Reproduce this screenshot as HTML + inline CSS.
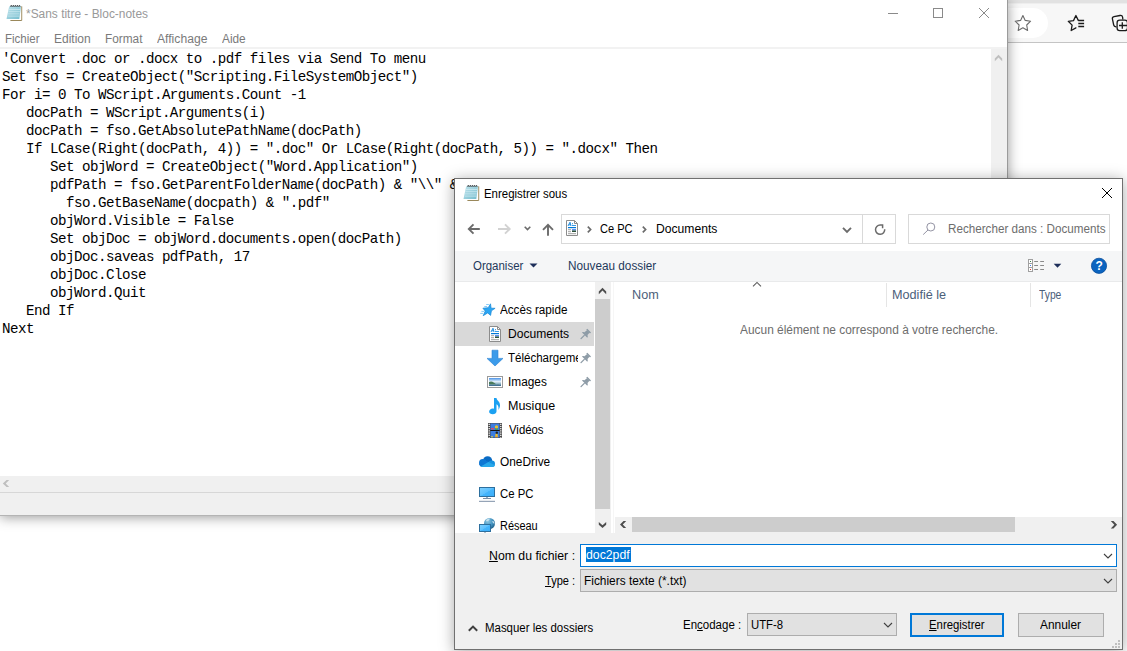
<!DOCTYPE html>
<html><head><meta charset="utf-8">
<style>
*{box-sizing:border-box;margin:0;padding:0}
html,body{width:1127px;height:651px;overflow:hidden;background:#fff}
body{position:relative;font-family:"Liberation Sans",sans-serif;font-size:12px;color:#000}
.a{position:absolute}
svg{position:absolute;overflow:visible}
.t{position:absolute;white-space:nowrap;font-size:12px;line-height:16px;height:16px}
#code{position:absolute;left:2px;top:50px;font-family:"Liberation Mono",monospace;font-size:14.2px;letter-spacing:-0.52px;line-height:18px;white-space:pre;color:#000}
</style></head><body>
<!-- Edge background -->
<div class="a" style="left:1008px;top:0;width:119px;height:42px;background:#f7f7f7"></div>
<div class="a" style="left:1008px;top:0;width:119px;height:4px;background:linear-gradient(#e2e2e2 0,#e2e2e2 70%,#f7f7f7 100%)"></div>
<div class="a" style="left:1000px;top:8px;width:48px;height:30px;background:#fff;border-radius:0 15px 15px 0"></div>
<div class="a" style="left:1008px;top:42px;width:119px;height:1px;background:#c4c4c4"></div>
<!--EDGEICONS-->
<!-- Notepad -->
<div class="a" id="np" style="left:0;top:0;width:1008px;height:516px;background:#fff;border-right:1px solid #9b9b9b;box-shadow:0 1px 12px rgba(0,0,0,.42)">
  <div class="a" style="left:0;top:47px;width:1007px;height:2px;background:#f2f2f2"></div>
  <div id="code">'Convert .doc or .docx to .pdf files via Send To menu
Set fso = CreateObject("Scripting.FileSystemObject")
For i= 0 To WScript.Arguments.Count -1
   docPath = WScript.Arguments(i)
   docPath = fso.GetAbsolutePathName(docPath)
   If LCase(Right(docPath, 4)) = ".doc" Or LCase(Right(docPath, 5)) = ".docx" Then
      Set objWord = CreateObject("Word.Application")
      pdfPath = fso.GetParentFolderName(docPath) &amp; "\\" &amp; _
        fso.GetBaseName(docpath) &amp; ".pdf"
      objWord.Visible = False
      Set objDoc = objWord.documents.open(docPath)
      objDoc.saveas pdfPath, 17
      objDoc.Close
      objWord.Quit
   End If
Next</div>
  <div class="a" style="left:991px;top:49px;width:16px;height:427px;background:#f0f0f0"></div>
  <div class="a" style="left:0;top:476px;width:1007px;height:16px;background:#f0f0f0"></div>
  <div class="a" style="left:0;top:492px;width:1007px;height:24px;background:#f0f0f0;border-top:1px solid #d7d7d7;border-bottom:1px solid #b4b4b4"></div>
</div>
<!--NPICONS-->
<!-- Dialog frame -->
<div class="a" id="dlg" style="left:454px;top:178px;width:669px;height:472px;background:#f0f0f0;border:1px solid #707070;box-shadow:0 2px 14px rgba(0,0,0,.35)"></div>
<div class="a" style="left:455px;top:179px;width:667px;height:72px;background:#fff"></div>
<div class="a" style="left:455px;top:251px;width:667px;height:31px;background:#f5f6f7;border-bottom:1px solid #e9eaeb"></div>
<!-- address box -->
<div class="a" style="left:561px;top:214px;width:335px;height:30px;background:#fff;border:1px solid #d9d9d9"></div>
<div class="a" style="left:862px;top:215px;width:1px;height:28px;background:#d9d9d9"></div>
<div class="a" style="left:908px;top:214px;width:202px;height:30px;background:#fff;border:1px solid #d9d9d9"></div>
<!-- main panes -->
<div class="a" style="left:455px;top:282px;width:159px;height:251px;background:#fff"></div>
<div class="a" style="left:455px;top:322px;width:139px;height:24px;background:#d9d9d9"></div>
<div class="a" style="left:595px;top:282px;width:16px;height:251px;background:#f0f0f0"></div>
<div class="a" style="left:613px;top:282px;width:1px;height:251px;background:#f6f6f6"></div>
<div class="a" style="left:595px;top:299px;width:15px;height:210px;background:#cdcdcd"></div>
<div class="a" style="left:614px;top:282px;width:508px;height:251px;background:#fff"></div>
<div class="a" style="left:886px;top:283px;width:1px;height:24px;background:#e5e5e5"></div>
<div class="a" style="left:1030px;top:283px;width:1px;height:24px;background:#e5e5e5"></div>
<div class="a" style="left:615px;top:517px;width:507px;height:16px;background:#f0f0f0"></div>
<div class="a" style="left:632px;top:517px;width:383px;height:15px;background:#cdcdcd"></div>
<!-- inputs -->
<div class="a" style="left:580px;top:544px;width:537px;height:23px;background:#fff;border:1px solid #0078d7"></div>
<div class="a" style="left:586px;top:547px;width:45px;height:15px;background:#0078d7"></div>
<div class="a" style="left:580px;top:569px;width:537px;height:23px;background:#e1e1e1;border:1px solid #adadad"></div>
<div class="a" style="left:747px;top:613px;width:150px;height:23px;background:#e1e1e1;border:1px solid #adadad"></div>
<div class="a" style="left:910px;top:613px;width:94px;height:24px;background:#e1e1e1;border:2px solid #0078d7"></div>
<div class="a" style="left:1018px;top:613px;width:86px;height:24px;background:#e1e1e1;border:1px solid #adadad"></div>
<svg width="1127" height="651" viewBox="0 0 1127 651" style="left:0;top:0">
<defs>
 <linearGradient id="gnp" x1="0" y1="0" x2="1" y2="1"><stop offset="0" stop-color="#bfe3ec"/><stop offset="1" stop-color="#74bccd"/></linearGradient>
 <linearGradient id="gmon" x1="0" y1="0" x2="1" y2="1"><stop offset="0" stop-color="#7fd0ff"/><stop offset=".5" stop-color="#5cc0fe"/><stop offset=".52" stop-color="#45b5fc"/><stop offset="1" stop-color="#3aaefa"/></linearGradient>
 <linearGradient id="gimg" x1="0" y1="0" x2="0" y2="1"><stop offset="0" stop-color="#4a93e8"/><stop offset=".45" stop-color="#e4f0fa"/><stop offset=".72" stop-color="#8fb4c4"/><stop offset="1" stop-color="#2d5f86"/></linearGradient>
 <radialGradient id="gglobe" cx=".35" cy=".3" r=".8"><stop offset="0" stop-color="#8cc6e2"/><stop offset=".6" stop-color="#3f8fbd"/><stop offset="1" stop-color="#1d587e"/></radialGradient>
</defs>
<!-- Notepad title icon -->
<g transform="translate(6.5,5)">
  <path d="M3.900 15.400H15.200V1.400" fill="none" stroke="#8f7a48" stroke-width="1"/>
  <path d="M3.500 2.200H14.700V14.900H3.500Z" fill="#fff"/>
  <path d="M2.7 1.3H14.5L12.8 13.9H0Z" fill="url(#gnp)"/>
  <path d="M2.3 4.5H13.8M1.9 6.7H13.5M1.5 8.9H13.2M1.1 11.1H12.9" stroke="#d3edf3" stroke-width=".7" fill="none"/>
  <path d="M4 2l.75-2 .75 2M6.050 2l.75-2 .75 2M8.100 2l.75-2 .75 2M10.150 2l.75-2 .75 2M12.200 2l.75-2 .75 2" stroke="#2b3336" stroke-width=".65" fill="none"/></g>
<!-- window controls -->
<g stroke="#8a8a8a" stroke-width="1" fill="none">
 <path d="M888 13.5H898"/>
 <rect x="933.5" y="8.5" width="9" height="9"/>
 <path d="M979 8L989 18M989 8L979 18"/>
</g>
<!-- notepad scroll arrows -->
<path d="M994.800 58.600L998.500 54.800L1002.200 58.600V61.300L998.500 57.600L994.800 61.300Z" fill="#bfbfbf"/>
<path d="M9.200 479.900H6.500L2.800 483.500L6.500 487.100H9.200L5.700 483.500Z" fill="#bfbfbf"/>
<!-- Edge icons -->
<path d="M1022.900 15.600L1025.200 20.400L1030.600 21.200L1026.700 25L1027.600 30.400L1022.900 27.800L1018.200 30.400L1019.100 25L1015.200 21.200L1020.600 20.400Z" fill="none" stroke="#6a6a6a" stroke-width="1.100" stroke-linejoin="round"/>
<path d="M1078.300 20.400L1075.900 15.500L1073.500 20.600L1068.300 21.300L1072.100 25.100L1071.200 30.500L1075.900 27.900" fill="none" stroke="#1a1a1a" stroke-width="1.300" stroke-linejoin="round" stroke-linecap="round"/>
<path d="M1078.300 20.500H1084.100M1078.300 23.500H1084.100M1078.300 26.500H1084.100" stroke="#1a1a1a" stroke-width="1.300"/>
<path d="M1116 26.900C1114.500 26.600 1114 26.300 1113.700 25L1112.400 18.900C1112.100 17.500 1112.700 17 1114 16.700L1120 15.500C1121.500 15.200 1122.300 15.700 1122.600 17.100L1122.800 19" fill="none" stroke="#1a1a1a" stroke-width="1.300" stroke-linecap="round"/>
<rect x="1117.100" y="20.200" width="10.400" height="10.400" rx="2.600" fill="none" stroke="#1a1a1a" stroke-width="1.300"/>
<path d="M1119 25.500H1127M1122.300 22.200V28.800" stroke="#1a1a1a" stroke-width="1.300"/>
<!-- Dialog title icon + close -->
<g transform="translate(463.500,185)">
  <path d="M3.900 15.400H15.200V1.400" fill="none" stroke="#8f7a48" stroke-width="1"/>
  <path d="M3.500 2.200H14.700V14.900H3.500Z" fill="#fff"/>
  <path d="M2.7 1.3H14.5L12.8 13.9H0Z" fill="url(#gnp)"/>
  <path d="M2.3 4.5H13.8M1.9 6.7H13.5M1.5 8.9H13.2M1.1 11.1H12.9" stroke="#d3edf3" stroke-width=".7" fill="none"/>
  <path d="M4 2l.75-2 .75 2M6.050 2l.75-2 .75 2M8.100 2l.75-2 .75 2M10.150 2l.75-2 .75 2M12.200 2l.75-2 .75 2" stroke="#2b3336" stroke-width=".65" fill="none"/></g>
<path d="M1102 188L1112 198M1112 188L1102 198" stroke="#000" stroke-width="1"/>
<!-- nav arrows -->
<g fill="none" stroke="#6b6b6b" stroke-width="1.9">
 <path d="M479.800 229H469M473.500 224.300L468.800 229L473.500 233.700"/>
 <path d="M524.700 226.800L527.500 229.600L530.300 226.800" stroke-width="1.6"/>
 <path d="M548 235.700V225M543 229.800L548 224.800L553 229.800"/>
 <path d="M587.800 226.700L590.600 229.500L587.800 232.300" stroke-width="1.7"/>
 <path d="M642.800 226.700L645.600 229.500L642.800 232.300" stroke-width="1.7"/>
 <path d="M843 227.800L847 231.800L851 227.800" stroke-width="1.9"/>
 <path d="M882.600 228.300V225.100H880.100A4.600 4.600 0 1 0 884.700 229.300" stroke-width="1.500" stroke-linejoin="miter"/>
</g>
<path d="M498 229H508.800M505 224.300L509.700 229L505 233.700" fill="none" stroke="#d2d2d2" stroke-width="1.9"/>
<g transform="translate(566,220)">
  <path d="M.5.5H8.5L11.5 3.5V15.5H.5Z" fill="#fff" stroke="#8c8c8c"/>
  <path d="M8.5.5V3.5H11.5" fill="none" stroke="#8c8c8c"/>
  <path d="M2 6L4 2.2L5 6M2.8 4.8H4.8" stroke="#1f8de0" stroke-width="1" fill="none"/>
  <rect x="6" y="3.2" width="1" height="1" fill="#1f8de0"/>
  <rect x="6" y="5" width="4" height="1" fill="#3a9be6"/>
  <rect x="2" y="7" width="8" height="1.2" fill="#0078d7"/>
  <rect x="2" y="9.2" width="3" height="1" fill="#a0a0a0"/>
  <rect x="2" y="11.2" width="3" height="1" fill="#a0a0a0"/>
  <rect x="6" y="9" width="4" height="1.5" fill="#5b8df0"/>
  <rect x="6" y="10.5" width="4" height="1.5" fill="#2c5238"/>
  <rect x="2" y="13.2" width="8" height="1" fill="#a0a0a0"/></g>
<!-- search magnifier -->
<circle cx="930.800" cy="227" r="4" fill="none" stroke="#9494a4" stroke-width="1"/>
<path d="M928 230L923.200 234.600" stroke="#9494a4" stroke-width="1"/>
<!-- toolbar -->
<path d="M529.500 263.500H537.500L533.500 267.500Z" fill="#1e2f5a"/>
<rect x="1028.500" y="259.500" width="4" height="12" fill="#fff" stroke="#a0a0a0"/>
<path d="M1028.500 263.500H1032.500M1028.500 267.500H1032.500" stroke="#a0a0a0"/>
<rect x="1030" y="261" width="1" height="1" fill="#3a7a4a"/><rect x="1030" y="265" width="1" height="1" fill="#3a7af0"/><rect x="1030" y="269" width="1" height="1" fill="#e03030"/>
<path d="M1034.200 261.500H1038M1040.200 261.500H1044M1034.200 265.500H1038M1040.200 265.500H1044M1034.200 269.500H1038M1040.200 269.500H1044" stroke="#8a8a8a" stroke-width="1"/>
<path d="M1053.700 263.800H1061.300L1057.500 267.800Z" fill="#1e2f5a"/>
<circle cx="1099" cy="265.800" r="7.600" fill="#0a64c0" stroke="#0b4f9c" stroke-width=".8"/>
<!-- sort chevron & scroll arrows -->
<path d="M753 286.300L757 282.400L761 286.300" fill="none" stroke="#5c5c5c" stroke-width="1.100"/>
<g fill="#4d4d4d">
 <path d="M598.800 291.600L602.500 287.700L606.200 291.600V294.300L602.500 290.500L598.800 294.300Z"/>
 <path d="M598.800 522L602.500 525.200L606.200 522V524.700L602.500 528L598.800 524.700Z"/>
 <path d="M626.200 520.900H623.500L620 524.500L623.500 528.100H626.200L622.800 524.500Z"/>
 <path d="M1110.800 521.100H1113.500L1117.100 524.700L1113.500 528.400H1110.800L1114.300 524.700Z"/>
</g>
<!-- nav pane icons -->
<path d="M490.500 303.800L491.100 308.200L495.100 308.300L491.400 310.800L490.600 315.400L487.700 312.900L483.200 315.700L485.200 311.100L482.900 308.200L488.200 307.700Z" fill="#2aa5f3" stroke="#1787d6" stroke-width=".7" stroke-linejoin="round"/>
<path d="M486.200 304.500H488.900M484.300 306.500H487.100M481.400 311.400H484M480.300 313.400H483.100" stroke="#7cc6f6" stroke-width=".9"/>
<g transform="translate(489,326)">
  <path d="M.5.5H8.5L11.5 3.5V15.5H.5Z" fill="#fff" stroke="#8c8c8c"/>
  <path d="M8.5.5V3.5H11.5" fill="none" stroke="#8c8c8c"/>
  <path d="M2 6L4 2.2L5 6M2.8 4.8H4.8" stroke="#1f8de0" stroke-width="1" fill="none"/>
  <rect x="6" y="3.2" width="1" height="1" fill="#1f8de0"/>
  <rect x="6" y="5" width="4" height="1" fill="#3a9be6"/>
  <rect x="2" y="7" width="8" height="1.2" fill="#0078d7"/>
  <rect x="2" y="9.2" width="3" height="1" fill="#a0a0a0"/>
  <rect x="2" y="11.2" width="3" height="1" fill="#a0a0a0"/>
  <rect x="6" y="9" width="4" height="1.5" fill="#5b8df0"/>
  <rect x="6" y="10.5" width="4" height="1.5" fill="#2c5238"/>
  <rect x="2" y="13.2" width="8" height="1" fill="#a0a0a0"/></g>
<g transform="translate(584.500,335.200)" fill="#8d9ba6">
  <g transform="rotate(45)">
   <rect x="-2.7" y="-6.6" width="5.400" height="1.500" rx=".4"/>
   <path d="M-1.700 -5.200H1.700L2.100 -1.600H-2.100Z"/>
   <path d="M-3.700 -.2C-3.700 -1.500 -2.600 -2 -1.800 -2H1.800C2.600 -2 3.700 -1.500 3.700 -.2Z"/>
   <rect x="-.65" y="-.3" width="1.300" height="5.800" rx=".6"/>
  </g></g>
<g transform="translate(584.500,359.200)" fill="#8d9ba6">
  <g transform="rotate(45)">
   <rect x="-2.7" y="-6.6" width="5.400" height="1.500" rx=".4"/>
   <path d="M-1.700 -5.200H1.700L2.100 -1.600H-2.100Z"/>
   <path d="M-3.700 -.2C-3.700 -1.500 -2.600 -2 -1.800 -2H1.800C2.600 -2 3.700 -1.500 3.700 -.2Z"/>
   <rect x="-.65" y="-.3" width="1.300" height="5.800" rx=".6"/>
  </g></g>
<g transform="translate(584.500,383.200)" fill="#8d9ba6">
  <g transform="rotate(45)">
   <rect x="-2.7" y="-6.6" width="5.400" height="1.500" rx=".4"/>
   <path d="M-1.700 -5.200H1.700L2.100 -1.600H-2.100Z"/>
   <path d="M-3.700 -.2C-3.700 -1.500 -2.600 -2 -1.800 -2H1.800C2.600 -2 3.700 -1.500 3.700 -.2Z"/>
   <rect x="-.65" y="-.3" width="1.300" height="5.800" rx=".6"/>
  </g></g>
<path d="M492 350.200H498V358.400H503L495 366L487 358.400H492Z" fill="#3c9bea" stroke="#2c83d4" stroke-width=".6"/>
<rect x="487.500" y="376.500" width="15" height="11" fill="#fff" stroke="#9a9a9a"/>
<rect x="489" y="378" width="12" height="8" fill="url(#gimg)"/>
<path d="M489 384.300V382Q491.500 380.500 494 382.800T499 384.300Z" fill="#4a7a5a"/>
<path d="M494 397.900h2.500c.2 2.500 3.800 3.600 3.500 7.600-.1 1.800-.8 3.400-1.600 4.400.6-3-.4-4.800-1.900-5.600v7.200c0 1.600-1.700 2.700-3.800 2.700-2 0-3.600-1-3.600-2.500 0-1.700 1.700-3.100 3.700-3.100.4 0 .8.100 1.200.2z" fill="#1ba1f2"/>
<rect x="488" y="423" width="14" height="15" fill="#4a4a4a"/>
<rect x="490.500" y="423.500" width="9" height="6.500" fill="#3b7de0"/><rect x="490.500" y="431" width="9" height="6.500" fill="#3b7de0"/>
<rect x="490.500" y="430" width="9" height="1" fill="#111"/>
<path d="M489.200 423.700v14M500.800 423.700v14" stroke="#fff" stroke-width="1.200" stroke-dasharray="1.200 1"/>
<circle cx="496.500" cy="427" r="1.700" fill="#e8c030"/><rect x="491" y="428" width="3" height="1.500" fill="#d04a70"/><rect x="495" y="428.500" width="3" height="1.200" fill="#38a048"/>
<circle cx="496.800" cy="432.800" r="1.200" fill="#222"/><circle cx="496.500" cy="435" r="1.300" fill="#e8c030"/><rect x="495" y="436" width="3" height="1.300" fill="#e0a030"/><rect x="491" y="436.300" width="2" height="1" fill="#d8d040"/>
<!-- onedrive -->
<g>
 <ellipse cx="487.600" cy="460.500" rx="4.600" ry="4.300" fill="#0a6bc4"/>
 <circle cx="482.800" cy="462.900" r="3.800" fill="#0f78d4"/>
 <circle cx="491.700" cy="463.700" r="3.300" fill="#1490df"/>
 <path d="M480.200 465.800C480.800 466.600 481.800 467 482.800 467H492.300C493.600 467 494.600 466.300 494.900 465.200L488 461.800Z" fill="#28a8ea"/>
 <path d="M479.300 464.300L485.500 460.600L488.300 462L480.800 466.400Z" fill="#0f78d4"/>
</g>
<!-- ce pc -->
<rect x="479.500" y="487.500" width="15" height="9" fill="url(#gmon)" stroke="#2d6f9e"/>
<rect x="486" y="497" width="2" height="1" fill="#9fb2c4"/>
<rect x="483" y="498" width="8" height="1" fill="#7a8fa6"/>
<rect x="479" y="500.800" width="16" height="1.100" fill="#8a9bb0"/>
<!-- reseau -->
<circle cx="489.500" cy="523.500" r="5.500" fill="url(#gglobe)"/>
<path d="M486 520q2-2 4-1.500l-1 2-2.500 1zM492 521l2 .5.500 2.500-1.500-1z" fill="#cfe7f2" opacity=".9"/>
<rect x="479.500" y="524.500" width="11" height="7" fill="url(#gmon)" stroke="#2d6f9e"/>
<rect x="484" y="532" width="2" height=".8" fill="#9fb2c4"/>
<!-- combobox chevrons -->
<g fill="none" stroke="#404040" stroke-width="1.100">
 <path d="M1104 554L1108 558L1112 554"/>
 <path d="M1104 579L1108 583L1112 579"/>
 <path d="M884 623L888 627L892 623"/>
</g>
<path d="M468.800 630.800L473 626.600L477.200 630.800" fill="none" stroke="#404040" stroke-width="2"/>
<!-- resize grip -->
<g fill="#bfbfbf">
 <rect x="1118" y="640" width="2" height="2"/><rect x="1115" y="643" width="2" height="2"/><rect x="1118" y="643" width="2" height="2"/>
 <rect x="1112" y="646" width="2" height="2"/><rect x="1115" y="646" width="2" height="2"/><rect x="1118" y="646" width="2" height="2"/>
</g>
</svg>
<div class="t" style="left:1095.500px;top:258px;color:#fff;font-weight:bold;font-size:12px;width:7px;text-align:center">?</div>

<div class="t" style="left:26.01px;top:5.5px;color:#999;"><span style="display:inline-block;transform:scaleX(0.9941);transform-origin:0 50%">*Sans titre - Bloc-notes</span></div>
<div class="t" style="left:5.04px;top:31.0px;color:#7a7a7a;"><span style="display:inline-block;transform:scaleX(0.9598);transform-origin:0 50%">Fichier</span></div>
<div class="t" style="left:53.69px;top:31.0px;color:#7a7a7a;"><span style="display:inline-block;transform:scaleX(1.0012);transform-origin:0 50%">Edition</span></div>
<div class="t" style="left:104.72px;top:31.0px;color:#7a7a7a;"><span style="display:inline-block;transform:scaleX(0.9862);transform-origin:0 50%">Format</span></div>
<div class="t" style="left:157.41px;top:31.0px;color:#7a7a7a;"><span style="display:inline-block;transform:scaleX(1.0116);transform-origin:0 50%">Affichage</span></div>
<div class="t" style="left:222.19px;top:31.0px;color:#7a7a7a;"><span style="display:inline-block;transform:scaleX(0.9870);transform-origin:0 50%">Aide</span></div>
<div class="t" style="left:484.15px;top:186.0px;color:#000;"><span style="display:inline-block;transform:scaleX(0.9520);transform-origin:0 50%">Enregistrer sous</span></div>
<div class="t" style="left:600.40px;top:221.0px;color:#000;"><span style="display:inline-block;transform:scaleX(0.9222);transform-origin:0 50%">Ce PC</span></div>
<div class="t" style="left:655.77px;top:221.0px;color:#000;"><span style="display:inline-block;transform:scaleX(1.0124);transform-origin:0 50%">Documents</span></div>
<div class="t" style="left:948.43px;top:221.0px;color:#6d6d6d;"><span style="display:inline-block;transform:scaleX(0.9719);transform-origin:0 50%">Rechercher dans : Documents</span></div>
<div class="t" style="left:473.04px;top:257.5px;color:#1e395b;"><span style="display:inline-block;transform:scaleX(0.9554);transform-origin:0 50%">Organiser</span></div>
<div class="t" style="left:568.02px;top:257.5px;color:#1e395b;"><span style="display:inline-block;transform:scaleX(0.9798);transform-origin:0 50%">Nouveau dossier</span></div>
<div class="t" style="left:631.56px;top:287.0px;color:#4c607a;"><span style="display:inline-block;transform:scaleX(1.0536);transform-origin:0 50%">Nom</span></div>
<div class="t" style="left:891.95px;top:287.0px;color:#4c607a;"><span style="display:inline-block;transform:scaleX(1.0545);transform-origin:0 50%">Modifié le</span></div>
<div class="t" style="left:1038.51px;top:287.0px;color:#4c607a;"><span style="display:inline-block;transform:scaleX(0.8593);transform-origin:0 50%">Type</span></div>
<div class="t" style="left:740.10px;top:322.0px;color:#6d6d6d;"><span style="display:inline-block;transform:scaleX(0.9920);transform-origin:0 50%">Aucun élément ne correspond à votre recherche.</span></div>
<div class="t" style="left:500.00px;top:302.0px;color:#000;"><span style="display:inline-block;transform:scaleX(0.9716);transform-origin:0 50%">Accès rapide</span></div>
<div class="t" style="left:508.08px;top:326.0px;color:#000;"><span style="display:inline-block;transform:scaleX(1.0065);transform-origin:0 50%">Documents</span></div>
<div class="t" style="left:507.98px;top:350.0px;color:#000;width:70px;overflow:hidden;"><span style="display:inline-block;transform:scaleX(0.9600);transform-origin:0 50%">Téléchargements</span></div>
<div class="t" style="left:508.13px;top:374.0px;color:#000;"><span style="display:inline-block;transform:scaleX(0.9864);transform-origin:0 50%">Images</span></div>
<div class="t" style="left:508.05px;top:398.0px;color:#000;"><span style="display:inline-block;transform:scaleX(1.0416);transform-origin:0 50%">Musique</span></div>
<div class="t" style="left:509.11px;top:422.0px;color:#000;"><span style="display:inline-block;transform:scaleX(0.9461);transform-origin:0 50%">Vidéos</span></div>
<div class="t" style="left:499.50px;top:454.0px;color:#000;"><span style="display:inline-block;transform:scaleX(0.9899);transform-origin:0 50%">OneDrive</span></div>
<div class="t" style="left:499.55px;top:486.0px;color:#000;"><span style="display:inline-block;transform:scaleX(0.9486);transform-origin:0 50%">Ce PC</span></div>
<div class="t" style="left:499.52px;top:518.0px;color:#000;"><span style="display:inline-block;transform:scaleX(0.9109);transform-origin:0 50%">Réseau</span></div>
<div class="t" style="left:489.39px;top:547.5px;color:#000;"><span style="display:inline-block;transform:scaleX(1.0239);transform-origin:0 50%"><u>N</u>om du fichier :</span></div>
<div class="t" style="left:545.42px;top:573.0px;color:#000;"><span style="display:inline-block;transform:scaleX(0.9218);transform-origin:0 50%"><u>T</u>ype :</span></div>
<div class="t" style="left:586.48px;top:547.0px;color:#fff;"><span style="display:inline-block;transform:scaleX(1.0220);transform-origin:0 50%">doc2pdf</span></div>
<div class="t" style="left:584.01px;top:573.0px;color:#000;"><span style="display:inline-block;transform:scaleX(0.9912);transform-origin:0 50%">Fichiers texte (*.txt)</span></div>
<div class="t" style="left:485.34px;top:620.0px;color:#000;"><span style="display:inline-block;transform:scaleX(0.9535);transform-origin:0 50%">Masquer les dossiers</span></div>
<div class="t" style="left:683.46px;top:617.0px;color:#000;"><span style="display:inline-block;transform:scaleX(0.9577);transform-origin:0 50%">En<u>c</u>odage :</span></div>
<div class="t" style="left:751.17px;top:617.0px;color:#000;"><span style="display:inline-block;transform:scaleX(0.9452);transform-origin:0 50%">UTF-8</span></div>
<div class="t" style="left:929.48px;top:617.0px;color:#000;"><span style="display:inline-block;transform:scaleX(0.9454);transform-origin:0 50%"><u>E</u>nregistrer</span></div>
<div class="t" style="left:1040.40px;top:617.0px;color:#000;"><span style="display:inline-block;transform:scaleX(0.9921);transform-origin:0 50%">Annuler</span></div>
</body></html>
